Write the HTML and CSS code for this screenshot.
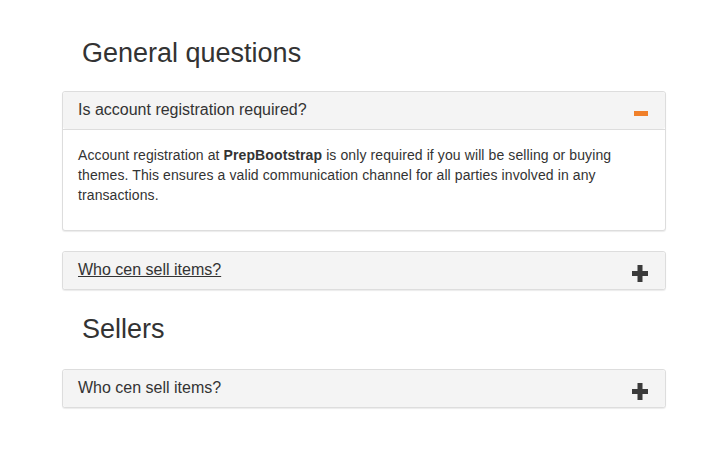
FILE: index.html
```html
<!DOCTYPE html>
<html>
<head>
<meta charset="utf-8">
<link rel="stylesheet" href="styles.css">
</head>
<body>
<div class="faq">
  <h3 class="section-title">General questions</h3>
  <div class="panel">
    <div class="panel-heading">
      <span class="panel-title">Is account registration required?</span>
      <svg class="icon minus" width="14" height="5" viewBox="0 0 14 5"><rect x="0" y="0" width="14" height="5" fill="#f0802a"/></svg>
    </div>
    <div class="panel-body">
      <p>Account registration at <strong>PrepBootstrap</strong> is only required if you will be selling or buying themes. This ensures a valid communication channel for all parties involved in any transactions.</p>
    </div>
  </div>
  <div class="panel">
    <div class="panel-heading">
      <span class="panel-title underline">Who cen sell items?</span>
      <svg class="icon plus" width="16" height="17" viewBox="0 0 16 17"><rect x="5.5" y="0" width="5" height="17" fill="#3b3b3b"/><rect x="0" y="6" width="16" height="5" fill="#3b3b3b"/></svg>
    </div>
  </div>
  <h3 class="section-title sellers">Sellers</h3>
  <div class="panel">
    <div class="panel-heading">
      <span class="panel-title">Who cen sell items?</span>
      <svg class="icon plus" width="16" height="17" viewBox="0 0 16 17"><rect x="5.5" y="0" width="5" height="17" fill="#3b3b3b"/><rect x="0" y="6" width="16" height="5" fill="#3b3b3b"/></svg>
    </div>
  </div>
</div>
</body>
</html>
```
FILE: styles.css
```css
html, body {
  margin: 0;
  padding: 0;
  background: #fff;
}
body {
  font-family: "Liberation Sans", Arial, sans-serif;
  color: #333;
  font-size: 14px;
  line-height: 20px;
}
.faq {
  width: 604px;
  margin-left: 62px;
  padding-top: 37px;
}
.section-title {
  font-size: 27px;
  font-weight: normal;
  line-height: 32px;
  margin: 0 0 22px 0;
  padding-left: 20px;
  color: #333;
}
.section-title.sellers {
  margin-top: 23px;
  margin-bottom: 24px;
}
.panel {
  border: 1px solid #ddd;
  border-radius: 3px;
  box-shadow: 0 1px 1px rgba(0,0,0,0.08);
  margin-bottom: 20px;
  background: #fff;
}
.panel-heading {
  background: #f4f4f4;
  padding: 9px 15px 10px 15px;
  display: flex;
  justify-content: space-between;
  align-items: flex-start;
  border-radius: 3px;
}
.panel-body {
  border-top: 1px solid #ddd;
  padding: 15px 15px 15px 15px;
}
.panel-title {
  font-size: 16px;
  line-height: 18px;
}
.underline {
  text-decoration: underline;
}
.icon {
  flex: none;
  margin-right: 2px;
}
.icon.minus {
  margin-top: 10px;
  margin-bottom: -5px;
}
.icon.plus {
  margin-top: 4px;
  margin-bottom: -3px;
}
.panel-body p {
  margin: 0 0 10px 0;
  letter-spacing: 0.1px;
}
```
